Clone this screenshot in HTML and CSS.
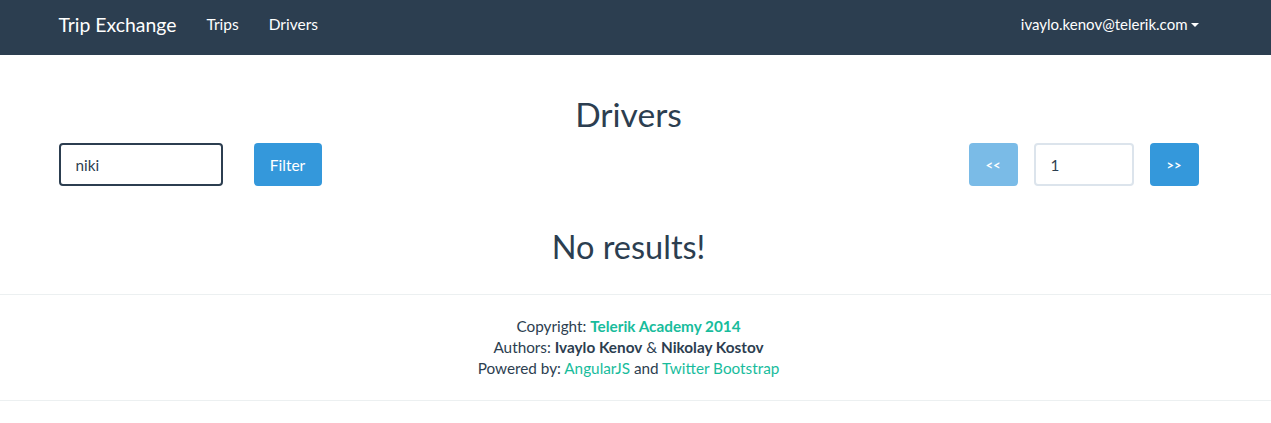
FILE: index.html
```html
<!DOCTYPE html>
<html>
<head>
<meta charset="utf-8">
<link rel="stylesheet" href="styles.css">
</head>
<body>
  <nav class="navbar">
    <div class="container nav-inner">
      <div class="nav-left">
        <a class="brand" href="#">Trip Exchange</a>
        <a class="nav-link" href="#">Trips</a>
        <a class="nav-link" href="#">Drivers</a>
      </div>
      <a class="nav-link user" href="#">ivaylo.kenov@telerik.com<span class="caret"></span></a>
    </div>
  </nav>
  <main class="container main">
    <h2 class="title">Drivers</h2>
    <div class="toolbar">
      <div class="filter">
        <input class="form-control search focused" type="text" value="niki">
        <button class="btn">Filter</button>
      </div>
      <div class="pager">
        <button class="btn disabled">&lt;&lt;</button>
        <input class="form-control page-input" type="text" value="1">
        <button class="btn">&gt;&gt;</button>
      </div>
    </div>
    <h2 class="empty">No results!</h2>
  </main>
  <hr class="rule">
  <footer class="container footer">
    <div>Copyright: <a class="link strong" href="#">Telerik Academy 2014</a></div>
    <div>Authors: <b>Ivaylo Kenov</b> &amp; <b>Nikolay Kostov</b></div>
    <div>Powered by: <a class="link" href="#">AngularJS</a> and <a class="link" href="#">Twitter Bootstrap</a></div>
  </footer>
  <hr class="rule">
</body>
</html>
```

FILE: styles.css
```css
* { box-sizing: border-box; }
html, body { margin: 0; padding: 0; background: #fff; }
body {
  font-family: Lato, "Open Sans", "Liberation Sans", sans-serif;
  font-size: 15.3px;
  line-height: 21px;
  color: #2c3e50;
}
.container { width: 1170px; margin-left: calc(50% - 592px); padding: 0 15px; }

.navbar { background: #2c3e50; height: 55px; }
.nav-inner { display: flex; justify-content: space-between; align-items: stretch; height: 55px; }
.nav-left { display: flex; align-items: stretch; margin-left: -15px; }
.navbar a { color: #fff; text-decoration: none; display: flex; align-items: center; padding-bottom: 6px; }
.brand { font-size: 19.4px; padding-left: 15px; padding-right: 15px; }
.nav-link { padding-left: 15px; padding-right: 15px; font-size: 15.5px; }
.nav-link.user { margin-right: -15px; font-size: 15px; }
.caret {
  display: inline-block; width: 0; height: 0; margin-left: 3px; margin-top: 1px;
  border-top: 4px solid #fff; border-left: 4px solid transparent; border-right: 4px solid transparent;
}

.main { text-align: center; }
.title { font-size: 33.6px; font-weight: 400; line-height: 35px; margin: 42px 0 0; }
.toolbar { display: flex; justify-content: space-between; margin-top: 11px; text-align: left; }
.filter, .pager { display: flex; align-items: center; }
.form-control {
  font-family: inherit; font-size: 15.3px; color: #2c3e50;
  height: 43px; padding: 0 15px; border: 2px solid #dce4ec; border-radius: 4px;
  background: #fff; outline: none;
}
.search { width: 164px; }
.focused { border-color: #2c3e50; }
.filter .btn { margin-left: 31px; width: 68px; padding: 0; }
.btn {
  font-family: inherit; font-size: 15.5px; color: #fff; background: #3498db;
  border: none; border-radius: 4px; height: 43px; padding: 0 16px; cursor: pointer;
}
.pager .btn { width: 49px; padding: 0; font-size: 13px; font-weight: 700; }
.btn.disabled { opacity: .65; }
.page-input { width: 100px; margin: 0 16px; }

.empty { font-size: 32.5px; font-weight: 400; line-height: 37px; margin: 42px 0 0; }

.rule { border: 0; border-top: 1px solid #ecf0f1; margin: 29px 0 21px; }
.footer + .rule { margin-top: 21px; }
.footer { text-align: center; }
.footer b { font-weight: 700; }
.link { color: #18bc9c; text-decoration: none; }
.link.strong { font-weight: 700; }
```
